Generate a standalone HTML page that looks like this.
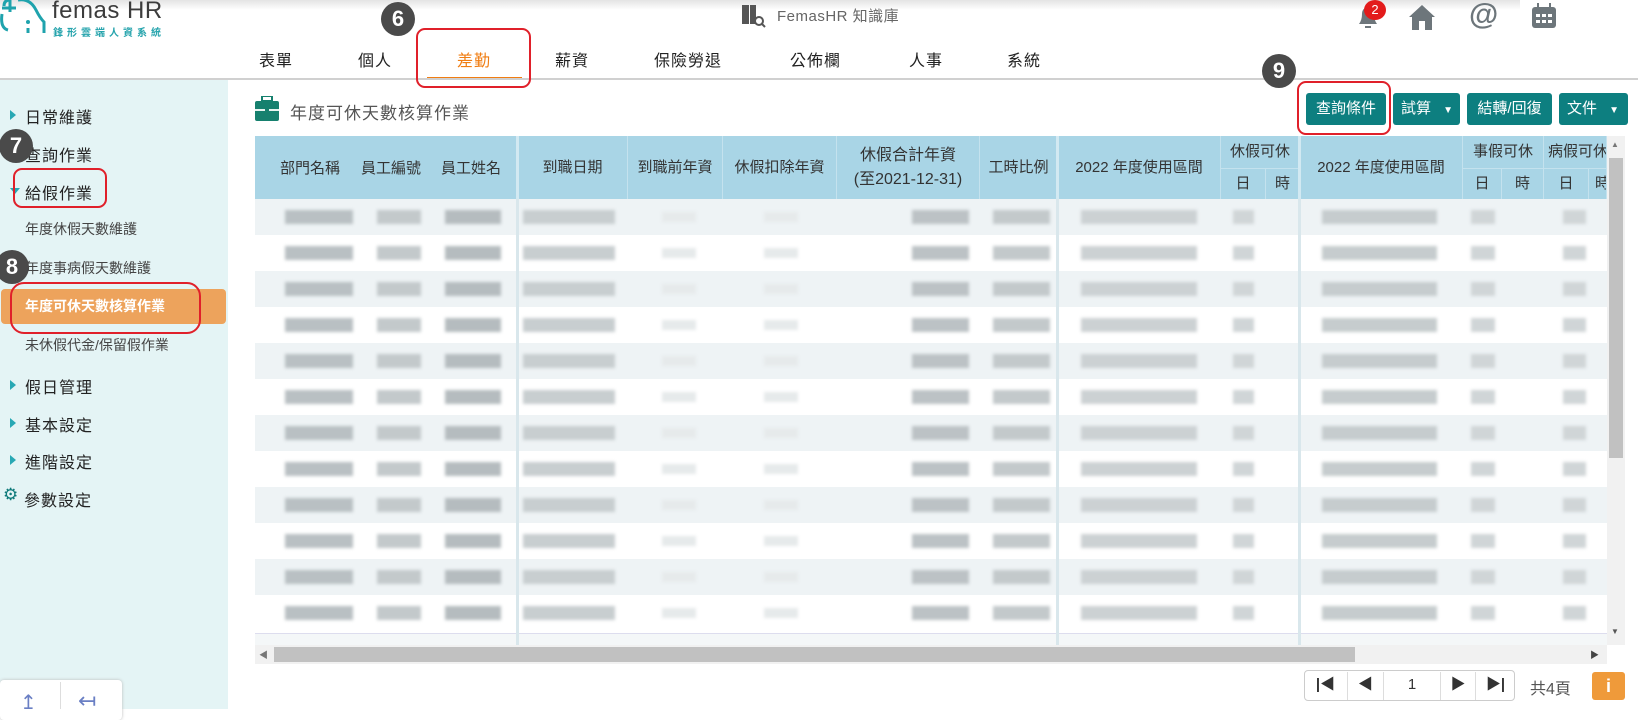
<!DOCTYPE html>
<html><head><meta charset="utf-8"><style>
*{margin:0;padding:0;box-sizing:border-box}
body{width:1638px;height:709px;overflow:hidden;background:#fff;font-family:"Liberation Sans","Noto Sans CJK TC",sans-serif;position:relative;color:#333}
.a{position:absolute}
.topsh{left:0;top:0;width:1520px;height:10px;background:linear-gradient(#e4e4e4,#fff)}
.nav{font-size:16px;top:47px;color:#222;letter-spacing:1px}
.circ{border-radius:50%;background:#4a4a4a;color:#fff;font-weight:bold;font-size:22px;text-align:center;width:34px;height:34px;line-height:34px}
.rb{border:2.5px solid #e0202a;border-radius:9px}
.side{left:0;top:80px;width:228px;height:629px;background:#e4f4f5}
.si{font-size:16px;color:#222;left:25px;letter-spacing:1px}
.ar{width:0;height:0;border-top:5px solid transparent;border-bottom:5px solid transparent;border-left:6px solid #28a8b4;left:10px}
.ss{font-size:14px;color:#444;left:25px}
.btn{top:93px;height:32px;background:#0d7f80;color:#fff;font-size:15px;line-height:32px;border-radius:3px;text-align:center}
.th{background:#a9d5e6;top:136px;height:63px;font-size:15px;color:#333;text-align:center;border-right:1px solid #c4e2ee;display:flex;align-items:center;justify-content:center;line-height:20px}
.sub{top:168px;height:31px;border-top:1px solid #c4e2ee}
.row{left:255px;width:1352px;height:36px}
.rowc{position:absolute;left:0;top:11px;width:1352px;height:14px;filter:blur(1.5px);background-repeat:no-repeat;
background-image:linear-gradient(#b9c0c3,#b9c0c3),linear-gradient(#c3c9cb,#c3c9cb),linear-gradient(#b5bcbf,#b5bcbf),linear-gradient(#c8ced0,#c8ced0),linear-gradient(#e6eaeb,#e6eaeb),linear-gradient(#e6eaeb,#e6eaeb),linear-gradient(#bcc2c5,#bcc2c5),linear-gradient(#c3c9cb,#c3c9cb),linear-gradient(#ccd1d3,#ccd1d3),linear-gradient(#d0d5d7,#d0d5d7),linear-gradient(#c6ccce,#c6ccce),linear-gradient(#d0d5d7,#d0d5d7),linear-gradient(#d0d5d7,#d0d5d7);
background-size:68px 14px,44px 14px,56px 14px,92px 14px,34px 10px,34px 10px,57px 14px,57px 14px,116px 14px,21px 14px,115px 14px,24px 14px,23px 14px;
background-position:30px 0,122px 0,190px 0,268px 0,407px 2px,509px 2px,657px 0,738px 0,826px 0,978px 0,1067px 0,1216px 0,1308px 0}
.vs{top:136px;width:3px;height:509px;background:#d9e7ec}
.pg{top:670px;height:31px;border:1px solid #ccc;background:#fff;font-size:15px;color:#333;text-align:center;line-height:29px}
.hl{top:157px;font-size:15px;color:#333}
</style></head><body>
<div class="a topsh"></div>
<svg class="a" style="left:0;top:0" width="48" height="36" viewBox="0 0 48 36"><path d="M4 6 Q4 0 10 0 M10 0 V12 M2 8 H16 M18 0 Q30 -2 36 10 Q40 18 44 22 V33" stroke="#1fa3ad" stroke-width="3" fill="none"/><circle cx="28" cy="22" r="2" fill="#1fa3ad"/><path d="M28 28 V33 M2 14 Q0 28 8 30" stroke="#1fa3ad" stroke-width="3" fill="none"/></svg>
<div class="a" style="left:52px;top:-3px;font-size:24px;color:#3c3c3c;letter-spacing:.5px">femas HR</div>
<div class="a" style="left:53px;top:24px;font-size:10px;color:#27a4ad;letter-spacing:4px;font-weight:bold">鋒形雲端人資系統</div>
<svg class="a" style="left:741px;top:4px" width="26" height="24" viewBox="0 0 26 24"><rect x="1" y="1" width="7" height="19" fill="#555"/><rect x="9" y="1" width="6" height="19" fill="#555"/><circle cx="18" cy="17" r="4" fill="none" stroke="#555" stroke-width="2"/><path d="M21 20 L24 23" stroke="#555" stroke-width="2"/></svg>
<div class="a" style="left:777px;top:5px;font-size:15px;color:#666;letter-spacing:.5px">FemasHR 知識庫</div>
<svg class="a" style="left:1353px;top:2px" width="30" height="30" viewBox="0 0 30 30"><path d="M6 22 Q9 18 9 12 Q9 6 15 5 Q21 6 21 12 Q21 18 24 22 Z" fill="#6d767b"/><rect x="12" y="24" width="6" height="2" fill="#6d767b"/></svg>
<div class="a" style="left:1364px;top:0;width:22px;height:20px;border-radius:50%;background:#e31b1b;color:#fff;font-size:13px;text-align:center;line-height:20px">2</div>
<svg class="a" style="left:1407px;top:3px" width="30" height="28" viewBox="0 0 30 28"><path d="M15 2 L28 14 H25 V27 H18 V18 H12 V27 H5 V14 H2 Z" fill="#6d767b"/></svg>
<div class="a" style="left:1469px;top:-2px;font-size:30px;color:#6d767b;font-weight:bold">@</div>
<svg class="a" style="left:1530px;top:2px" width="28" height="28" viewBox="0 0 28 28"><rect x="2" y="5" width="24" height="21" rx="3" fill="#6d767b"/><rect x="7" y="1" width="2" height="6" fill="#6d767b"/><rect x="19" y="1" width="2" height="6" fill="#6d767b"/><g fill="#fff"><rect x="6" y="12" width="4" height="3"/><rect x="12" y="12" width="4" height="3"/><rect x="18" y="12" width="4" height="3"/><rect x="6" y="18" width="4" height="3"/><rect x="12" y="18" width="4" height="3"/><rect x="18" y="18" width="4" height="3"/></g></svg>
<div class="a nav" style="left:259px">表單</div>
<div class="a nav" style="left:358px">個人</div>
<div class="a nav" style="left:457px;color:#f07d12">差勤</div>
<div class="a nav" style="left:555px">薪資</div>
<div class="a nav" style="left:654px">保險勞退</div>
<div class="a nav" style="left:790px">公佈欄</div>
<div class="a nav" style="left:909px">人事</div>
<div class="a nav" style="left:1007px">系統</div>
<div class="a" style="left:427px;top:77px;width:95px;height:3px;background:#f07d12"></div>
<div class="a" style="left:0;top:78px;width:1638px;height:2px;background:#d0d0d0"></div>
<div class="a rb" style="left:416px;top:28px;width:115px;height:60px"></div>
<div class="a circ" style="left:381px;top:2px">6</div>
<div class="a side"></div>
<div class="a ar" style="top:110px"></div><div class="a si" style="top:104px">日常維護</div>
<div class="a si" style="top:142px">查詢作業</div>
<div class="a" style="left:10px;top:188px;border-left:5px solid transparent;border-right:5px solid transparent;border-top:6px solid #28a8b4"></div><div class="a si" style="top:180px">給假作業</div>
<div class="a rb" style="left:13px;top:168px;width:94px;height:40px"></div>
<div class="a circ" style="left:-1px;top:129px">7</div>
<div class="a ss" style="top:219px">年度休假天數維護</div>
<div class="a ss" style="top:258px">年度事病假天數維護</div>
<div class="a circ" style="left:-5px;top:250px">8</div>
<div class="a" style="left:1px;top:289px;width:225px;height:35px;background:#eda35c;border-radius:4px"></div>
<div class="a ss" style="top:296px;color:#fff;font-weight:bold">年度可休天數核算作業</div>
<div class="a rb" style="left:10px;top:282px;width:191px;height:52px;border-radius:14px"></div>
<div class="a ss" style="top:335px">未休假代金/保留假作業</div>
<div class="a ar" style="top:380px"></div><div class="a si" style="top:374px">假日管理</div>
<div class="a ar" style="top:418px"></div><div class="a si" style="top:412px">基本設定</div>
<div class="a ar" style="top:455px"></div><div class="a si" style="top:449px">進階設定</div>
<div class="a" style="left:3px;top:485px;font-size:17px;color:#0e7a7a">⚙</div><div class="a si" style="top:487px;left:24px">參數設定</div>
<div class="a" style="left:0;top:680px;width:122px;height:40px;background:#fff;border-radius:4px;box-shadow:0 0 3px #bbb"></div>
<div class="a" style="left:60px;top:682px;width:1px;height:27px;background:#ddd"></div>
<div class="a" style="left:20px;top:690px;font-size:20px;color:#6a7fc4">↥</div>
<div class="a" style="left:78px;top:688px;font-size:22px;color:#6a7fc4">↤</div>
<svg class="a" style="left:255px;top:96px" width="24" height="25" viewBox="0 0 24 25"><rect x="7" y="0" width="10" height="5" fill="none" stroke="#16806e" stroke-width="2"/><rect x="0" y="5" width="24" height="20" rx="2" fill="#16806e"/><rect x="0" y="13" width="24" height="2" fill="#e8f4f0"/><rect x="10" y="11" width="4" height="6" fill="#16806e"/></svg>
<div class="a" style="left:290px;top:99px;font-size:17px;color:#555;letter-spacing:1px">年度可休天數核算作業</div>
<div class="a btn" style="left:1306px;width:80px">查詢條件</div>
<div class="a btn" style="left:1393px;width:67px;text-align:left;padding-left:8px">試算 <span style="font-size:10px;margin-left:8px">▼</span></div>
<div class="a btn" style="left:1467px;width:85px">結轉/回復</div>
<div class="a btn" style="left:1559px;width:69px;text-align:left;padding-left:8px">文件 <span style="font-size:10px;margin-left:8px">▼</span></div>
<div class="a rb" style="left:1297px;top:81px;width:94px;height:54px"></div>
<div class="a circ" style="left:1262px;top:54px">9</div>
<div class="a" style="left:255px;top:199px;width:1352px;height:446px;background:#fff"></div>
<div class="a row" style="top:199px;background:#eef3f5"><div class="rowc"></div></div>
<div class="a row" style="top:235px"><div class="rowc"></div></div>
<div class="a row" style="top:271px;background:#eef3f5"><div class="rowc"></div></div>
<div class="a row" style="top:307px"><div class="rowc"></div></div>
<div class="a row" style="top:343px;background:#eef3f5"><div class="rowc"></div></div>
<div class="a row" style="top:379px"><div class="rowc"></div></div>
<div class="a row" style="top:415px;background:#eef3f5"><div class="rowc"></div></div>
<div class="a row" style="top:451px"><div class="rowc"></div></div>
<div class="a row" style="top:487px;background:#eef3f5"><div class="rowc"></div></div>
<div class="a row" style="top:523px"><div class="rowc"></div></div>
<div class="a row" style="top:559px;background:#eef3f5"><div class="rowc"></div></div>
<div class="a row" style="top:595px"><div class="rowc"></div></div>
<div class="a" style="left:255px;top:633px;width:1352px;height:12px;background:#f4f7f8;border-top:1px solid #dde"></div>
<div class="a vs" style="left:516px"></div>
<div class="a vs" style="left:1056px"></div>
<div class="a vs" style="left:1298px"></div>
<div class="a th" style="left:255px;width:263px"></div>
<div class="a hl" style="left:280px">部門名稱</div>
<div class="a hl" style="left:361px">員工編號</div>
<div class="a hl" style="left:441px">員工姓名</div>
<div class="a th" style="left:518px;width:110px">到職日期</div>
<div class="a th" style="left:628px;width:95px">到職前年資</div>
<div class="a th" style="left:723px;width:114px">休假扣除年資</div>
<div class="a th" style="left:837px;width:143px;flex-direction:column;font-size:16px;line-height:24px">休假合計年資<br>(至2021-12-31)</div>
<div class="a th" style="left:980px;width:78px">工時比例</div>
<div class="a th" style="left:1058px;width:163px">2022 年度使用區間</div>
<div class="a th" style="left:1221px;width:79px;height:32px">休假可休</div>
<div class="a th sub" style="left:1221px;width:45px">日</div>
<div class="a th sub" style="left:1266px;width:34px">時</div>
<div class="a th" style="left:1300px;width:163px">2022 年度使用區間</div>
<div class="a th" style="left:1463px;width:81px;height:32px">事假可休</div>
<div class="a th sub" style="left:1463px;width:39px">日</div>
<div class="a th sub" style="left:1502px;width:42px">時</div>
<div class="a th" style="left:1544px;width:63px;height:32px;justify-content:flex-start;padding-left:4px;overflow:hidden;white-space:nowrap">病假可休</div>
<div class="a th sub" style="left:1544px;width:45px">日</div>
<div class="a th sub" style="left:1589px;width:18px;justify-content:flex-start;padding-left:6px;overflow:hidden">時</div>
<div class="a" style="left:516px;top:136px;width:3px;height:63px;background:#d2e9f2"></div>
<div class="a" style="left:1056px;top:136px;width:3px;height:63px;background:#d2e9f2"></div>
<div class="a" style="left:1298px;top:136px;width:3px;height:63px;background:#d2e9f2"></div>
<div class="a" style="left:1607px;top:136px;width:18px;height:509px;background:#f1f1f1"></div>
<div class="a" style="left:1609px;top:158px;width:14px;height:300px;background:#c1c1c1"></div>
<div class="a" style="left:1611px;top:140px;font-size:8px;color:#777">▲</div>
<div class="a" style="left:1611px;top:627px;font-size:8px;color:#555">▼</div>
<div class="a" style="left:255px;top:645px;width:1352px;height:19px;background:#f1f1f1"></div>
<div class="a" style="left:274px;top:647px;width:1081px;height:15px;background:#c1c1c1"></div>
<div class="a" style="left:259px;top:648px;font-size:9px;color:#777">◀</div>
<div class="a" style="left:1590px;top:648px;font-size:9px;color:#444">▶</div>
<div class="a pg" style="left:1304px;width:211px;border-radius:4px"></div>
<div class="a pg" style="left:1304px;width:43px;border:none;background:none;font-weight:bold">|◀</div>
<div class="a" style="left:1347px;top:672px;width:1px;height:28px;background:#ddd"></div>
<div class="a pg" style="left:1348px;width:35px;border:none;background:none">◀</div>
<div class="a" style="left:1383px;top:672px;width:1px;height:28px;background:#ddd"></div>
<div class="a pg" style="left:1384px;width:56px;border:none;background:none">1</div>
<div class="a" style="left:1440px;top:672px;width:1px;height:28px;background:#ddd"></div>
<div class="a pg" style="left:1441px;width:34px;border:none;background:none">▶</div>
<div class="a" style="left:1475px;top:672px;width:1px;height:28px;background:#ddd"></div>
<div class="a pg" style="left:1476px;width:39px;border:none;background:none;font-weight:bold">▶|</div>
<div class="a" style="left:1530px;top:675px;font-size:16px;color:#555">共4頁</div>
<div class="a" style="left:1592px;top:672px;width:33px;height:28px;background:#ef9a3a;border-radius:3px;color:#fff;font-weight:bold;text-align:center;line-height:28px;font-size:18px">i</div>
</body></html>
